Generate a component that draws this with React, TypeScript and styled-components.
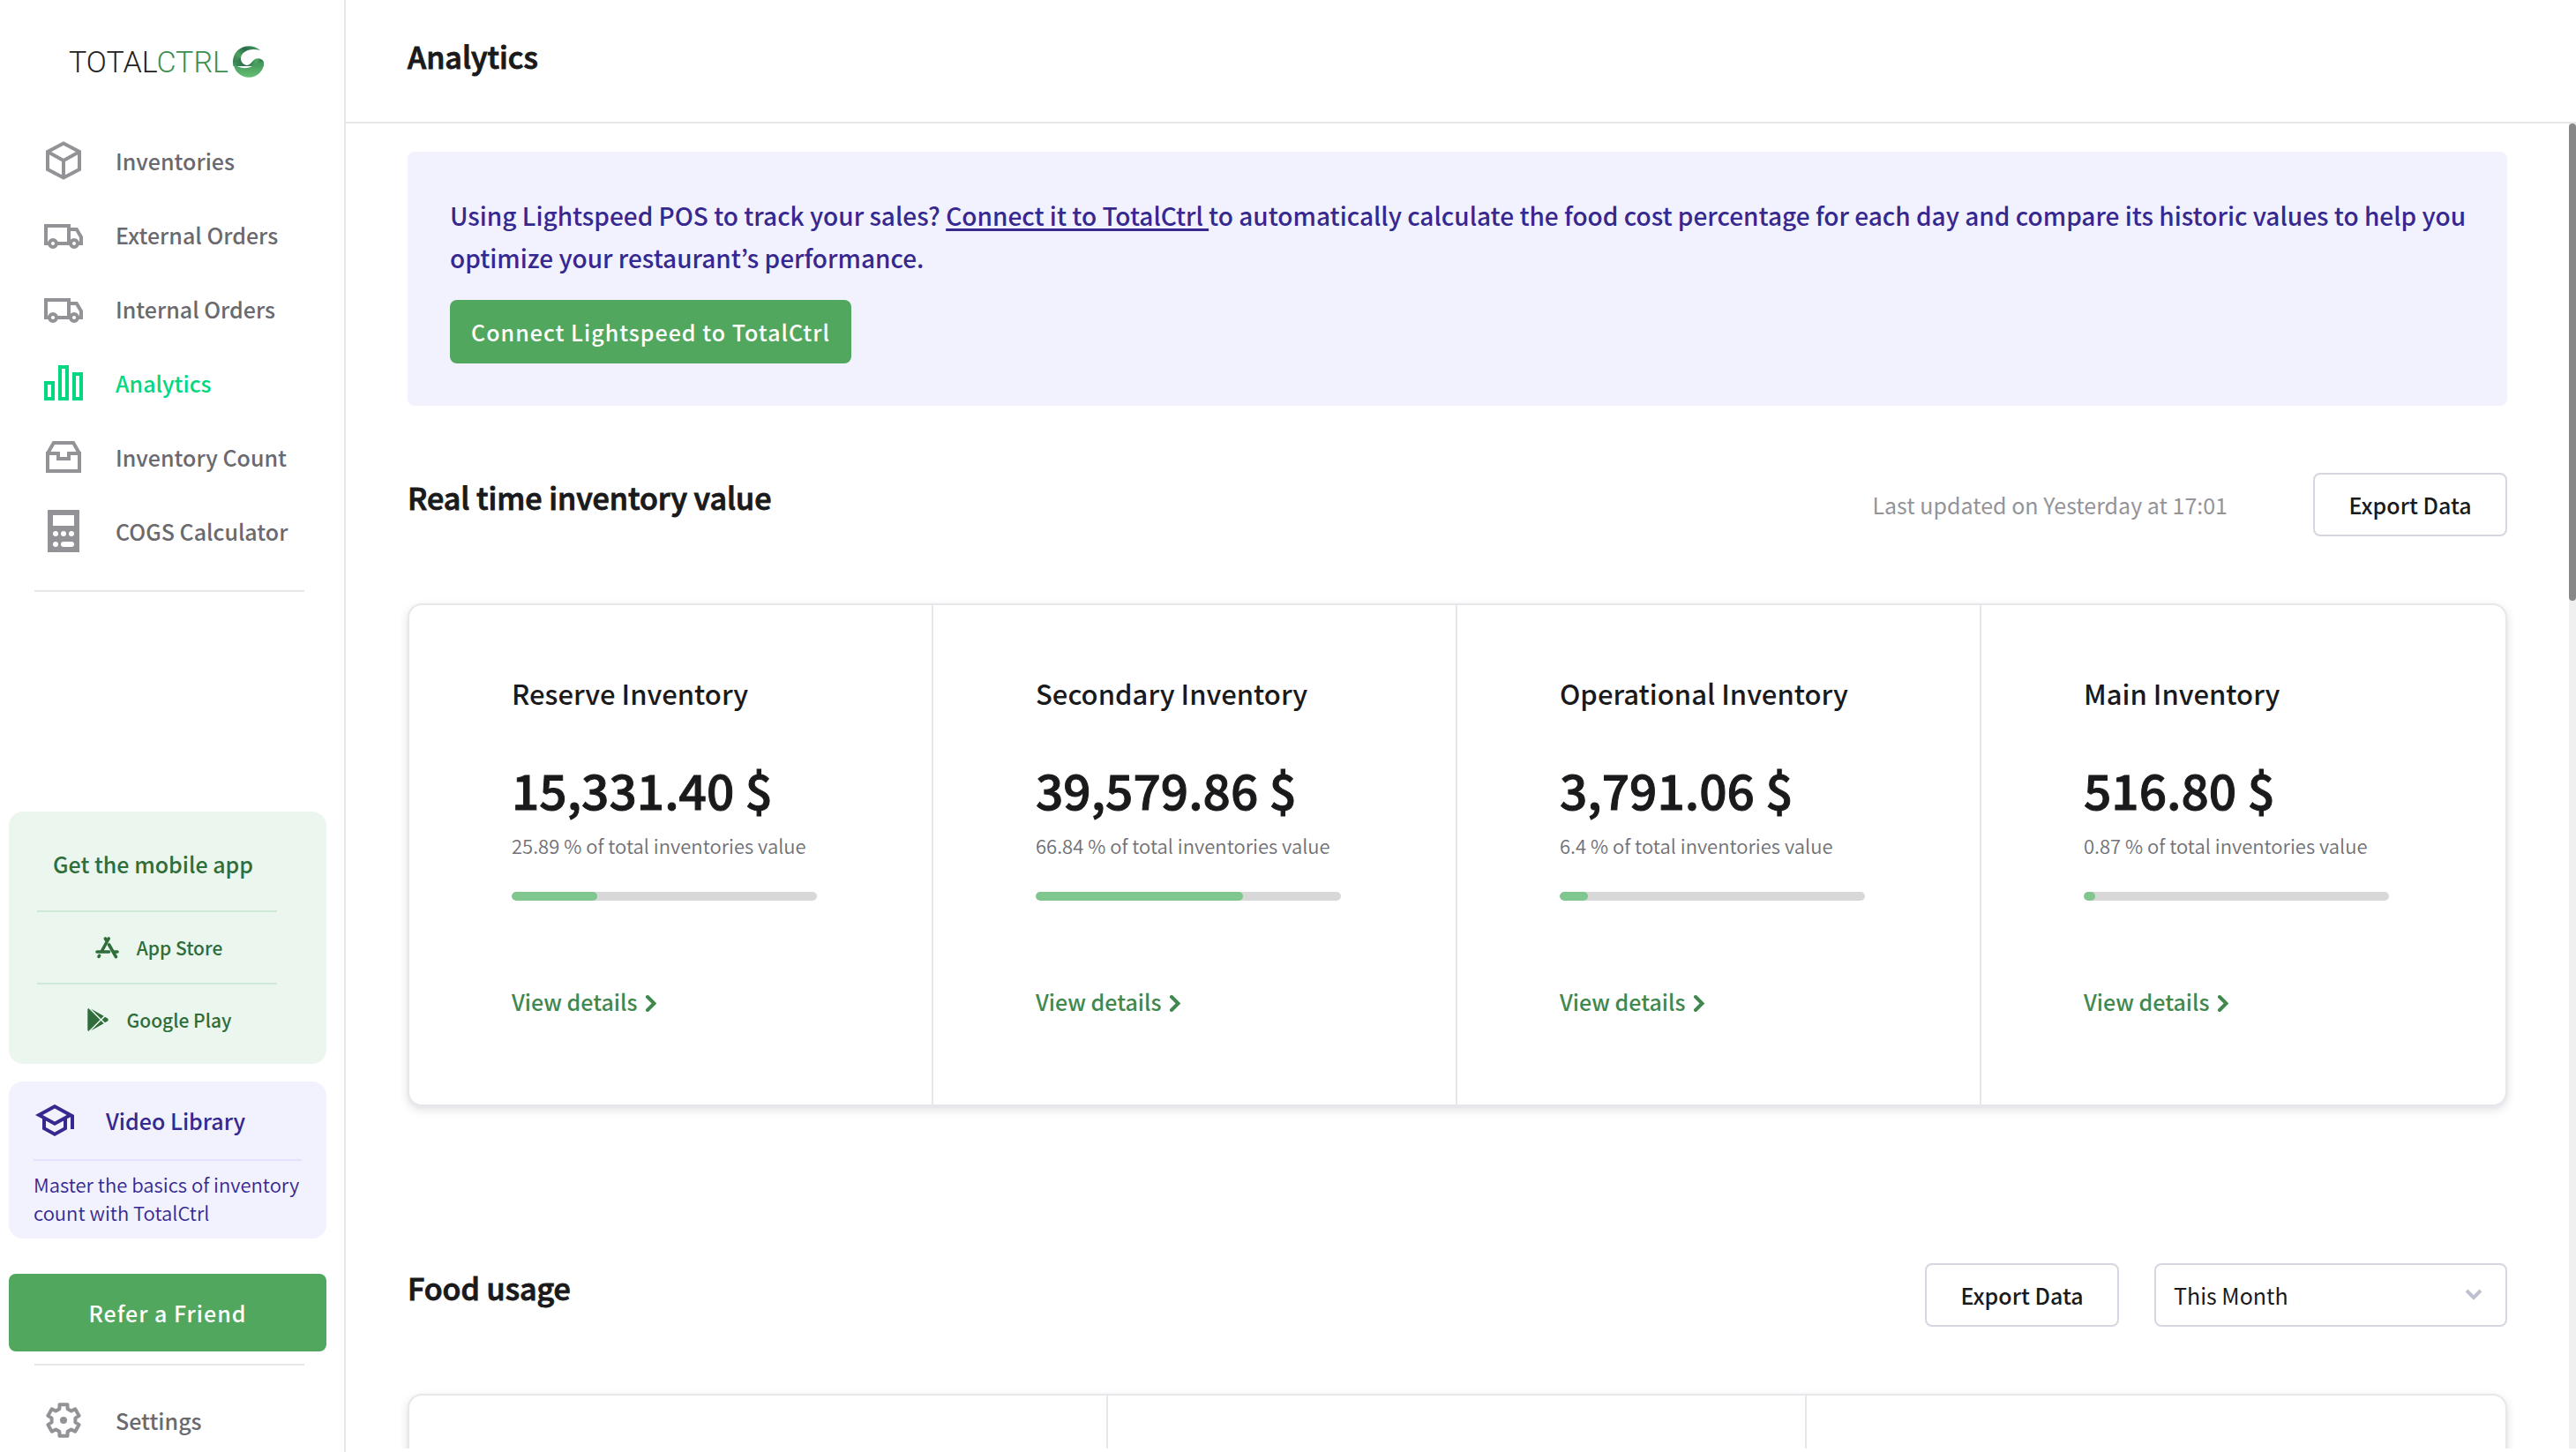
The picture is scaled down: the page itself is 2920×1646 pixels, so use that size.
import React from "react";
import styled, { createGlobalStyle } from "styled-components";
import { FaGooglePlay } from "react-icons/fa";
import { MdOutlineSchool } from "react-icons/md";

const color = {
  ink: "#1a1a1c",
  nav: "#69696e",
  icon: "#929297",
  muted: "#949498",
  sub: "#707075",
  line: "#e6e6eb",
  control: "#d6d6e0",
  active: "#04d782",
  green: "#52a75e",
  link: "#41884f",
  mintBg: "#ebf6ee",
  mintLine: "#d0e8d6",
  forest: "#2f6d3a",
  lilacBg: "#f2f1fe",
  lilacLine: "#e4e1fd",
  indigo: "#35288f",
};

const GlobalStyle = createGlobalStyle`
  *, *::before, *::after { box-sizing: border-box; }
  body {
    margin: 0;
    background: #fff;
    color: ${color.ink};
    font-family: "Noto Sans CJK KR", "Open Sans", sans-serif;
    font-size: 25px;
    line-height: 40px;
  }
  h1, h2, h3, p, ul { margin: 0; padding: 0; }
  ul { list-style: none; }
  a { color: inherit; text-decoration: none; }
  button, select { font: inherit; cursor: pointer; }
  svg { display: block; flex: none; }
`;

/* ---------- shell ---------- */

const Shell = styled.div`
  display: flex;
  height: 100vh;
  overflow: hidden;
`;

const Sidebar = styled.aside`
  flex: none;
  display: flex;
  flex-direction: column;
  width: 392px;
  border-right: 2px solid ${color.line};
`;

const Main = styled.main`
  flex: 1;
  min-width: 0;
  display: flex;
  flex-direction: column;
  padding-bottom: 4px;
`;

const Header = styled.header`
  flex: none;
  height: 140px;
  padding: 36px 70px;
  border-bottom: 2px solid ${color.line};
`;

const Viewport = styled.div`
  flex: 1;
  min-height: 0;
  display: flex;
`;

const Content = styled.div`
  flex: 1;
  min-width: 0;
  padding: 32px 70px 96px;
  overflow-y: auto;
  scrollbar-width: none;
`;

const ScrollTrack = styled.div`
  flex: none;
  width: 8px;
  background: #f0f0f1;
`;

const ScrollThumb = styled.div`
  height: 36%;
  border-radius: 8px;
  background: #888;
`;

/* ---------- sidebar ---------- */

const Brand = styled.a`
  flex: none;
  display: flex;
  align-items: center;
  gap: 5px;
  height: 140px;
  padding-left: 78px;
  font-family: Roboto, sans-serif;
  font-size: 34px;
  font-weight: 300;
  color: #222;
`;

const BrandAccent = styled.span`
  color: #3d8f50;
`;

const NavLink = styled.a<{ $active?: boolean; $compact?: boolean }>`
  display: flex;
  align-items: center;
  gap: 35px;
  height: ${(p) => (p.$compact ? 72 : 84)}px;
  padding-left: 48px;
  font-weight: 500;
  color: ${(p) => (p.$active ? color.active : color.nav)};

  svg {
    color: ${(p) => (p.$active ? color.active : color.icon)};
  }
`;

const Divider = styled.hr`
  flex: none;
  height: 2px;
  margin: 25px 45px 26px 39px;
  border: 0;
  background: ${color.line};
`;

const SidebarFoot = styled.div`
  margin-top: auto;

  ${Divider} {
    margin-top: 14px;
  }
`;

const AppCard = styled.section`
  margin: 0 20px 20px 10px;
  padding: 39px 56px 10px 32px;
  border-radius: 16px;
  background: ${color.mintBg};
  color: ${color.forest};
  font-weight: 500;
`;

const AppTitle = styled.h3`
  margin-bottom: 33px;
  padding-left: 18px;
  font-size: 25px;
  font-weight: 500;
`;

const StoreLink = styled.a`
  display: flex;
  align-items: center;
  justify-content: center;
  gap: 20px;
  height: 82px;
  padding-left: 4px;
  border-top: 2px solid ${color.mintLine};
  font-size: 21px;
`;

const VideoCard = styled.section`
  margin: 0 20px 40px 10px;
  padding: 20px 28px 14px;
  border-radius: 16px;
  background: ${color.lilacBg};
  color: ${color.indigo};
`;

const VideoLink = styled.a`
  display: flex;
  align-items: center;
  gap: 34px;
  padding-bottom: 20px;
  border-bottom: 2px solid ${color.lilacLine};
  font-weight: 500;
`;

const VideoText = styled.p`
  margin-top: 10px;
  font-size: 22px;
  font-weight: 350;
  line-height: 32px;
`;

/* ---------- buttons ---------- */

const PrimaryButton = styled.button`
  height: 72px;
  padding: 0 24px;
  border: 0;
  border-radius: 8px;
  background: ${color.green};
  color: #fff;
  font-weight: 500;
  letter-spacing: 1px;
`;

const ReferButton = styled(PrimaryButton)`
  display: block;
  width: 360px;
  height: 88px;
  margin-left: 10px;
`;

const OutlineButton = styled.button`
  width: 220px;
  height: 72px;
  border: 2px solid ${color.control};
  border-radius: 8px;
  background: #fff;
  color: ${color.ink};
  font-weight: 500;
`;

const SelectBox = styled.label`
  display: grid;
  align-items: center;
  width: 400px;
  height: 72px;

  > * {
    grid-area: 1 / 1;
  }

  svg {
    justify-self: end;
    margin-right: 28px;
    color: #bec1cf;
    pointer-events: none;
  }
`;

const Select = styled.select`
  width: 100%;
  height: 100%;
  padding: 0 64px 0 20px;
  border: 2px solid ${color.control};
  border-radius: 8px;
  appearance: none;
  background: #fff;
  color: ${color.ink};
`;

/* ---------- content ---------- */

const Title = styled.h2`
  font-size: 34px;
  font-weight: 500;
  line-height: 56px;
  -webkit-text-stroke: 1px currentColor;
`;

const Banner = styled.section`
  padding: 48px 40px 48px 48px;
  border-radius: 8px;
  background: ${color.lilacBg};
`;

const BannerText = styled.p`
  margin-bottom: 24px;
  color: ${color.indigo};
  font-size: 28px;
  font-weight: 500;
  line-height: 48px;

  a {
    text-decoration: underline;
    text-decoration-thickness: 3px;
    text-underline-offset: 3px;
  }
`;

const SectionHead = styled.div<{ $gap: number; $top: number }>`
  display: flex;
  align-items: center;
  gap: ${(p) => p.$gap}px;
  margin: ${(p) => p.$top}px 0 76px;

  ${Title} {
    align-self: flex-start;
    margin-right: auto;
  }
`;

const Updated = styled.p`
  color: ${color.muted};
`;

const CardRow = styled.div<{ $columns: number }>`
  display: grid;
  grid-template-columns: repeat(${(p) => p.$columns}, 1fr);
  border: 2px solid ${color.line};
  border-radius: 16px;
  box-shadow: 0 2px 2px ${color.line}, 0 4px 12px rgba(20, 20, 40, 0.12);
`;

const Card = styled.article`
  min-height: 320px;
  padding: 76px 132px 97px 116px;

  & + & {
    box-shadow: -2px 0 0 ${color.line};
  }
`;

const CardTitle = styled.h3`
  font-size: 31px;
  font-weight: 500;
  line-height: 48px;
  white-space: nowrap;
`;

const Amount = styled.p`
  margin-top: 48px;
  font-size: 55px;
  font-weight: 500;
  line-height: 72px;
  white-space: nowrap;
  -webkit-text-stroke: 1px currentColor;
`;

const Share = styled.p`
  margin-top: 12px;
  color: ${color.sub};
  font-size: 22px;
  font-weight: 350;
  line-height: 32px;
  white-space: nowrap;
`;

const Track = styled.div`
  height: 10px;
  margin-top: 37px;
  overflow: hidden;
  border-radius: 5px;
  background: #d8d8d8;
`;

const Fill = styled.div`
  height: 100%;
  border-radius: 5px;
  background: #7fc78e;
`;

const DetailsLink = styled.a`
  display: flex;
  align-items: center;
  gap: 8px;
  margin-top: 94px;
  color: ${color.link};
  font-weight: 500;
`;

/* ---------- icons ---------- */

const Icon = ({ children }: { children: React.ReactNode }) => (
  <svg width="48" height="48" viewBox="0 0 24 24" fill="none" stroke="currentColor" strokeWidth="2" aria-hidden="true">
    {children}
  </svg>
);

const BoxIcon = () => (
  <Icon>
    <path d="M12 2.2 21 7v10l-9 4.8L3 17V7zM3 7l9 5 9-5M12 12v9.8" />
  </Icon>
);

const TruckIcon = () => (
  <Icon>
    <path d="M4 17H2V7h13v10M8 17h8M15 9h4.4L22 13.4V17h-2" />
    <circle cx="6" cy="17" r="2" />
    <circle cx="18" cy="17" r="2" />
  </Icon>
);

const BarsIcon = () => (
  <Icon>
    <path d="M2 12h4v9H2zM10 3h4v18h-4zM18 7h4v14h-4z" />
  </Icon>
);

const TrayIcon = () => (
  <Icon>
    <path d="M3 10h6v3h6v-3h6v10H3zM3 10l3.4-6h11.2L21 10" />
  </Icon>
);

const CalculatorIcon = () => (
  <Icon>
    <g stroke="none">
      <path fill="currentColor" d="M3 0h18v24H3z" />
      <path fill="#fff" d="M6 3h12v6H6z" />
      <circle fill="#fff" cx="7.5" cy="13.5" r="1.5" />
      <circle fill="#fff" cx="12" cy="13.5" r="1.5" />
      <circle fill="#fff" cx="16.5" cy="13.5" r="1.5" />
      <circle fill="#fff" cx="7.5" cy="19.5" r="1.5" />
      <rect fill="#fff" x="10.5" y="18" width="7.5" height="3" rx="1.5" />
    </g>
  </Icon>
);

const gearPoints = [0, 1, 2, 3, 4, 5]
  .flatMap((tooth) =>
    [
      [-20, 6.8],
      [-14, 9.2],
      [14, 9.2],
      [20, 6.8],
    ].map(([offset, radius]) => {
      const a = ((tooth * 60 - 90 + offset) * Math.PI) / 180;
      return `${(12 + radius * Math.cos(a)).toFixed(2)},${(12 + radius * Math.sin(a)).toFixed(2)}`;
    })
  )
  .join(" ");

const GearIcon = () => (
  <Icon>
    <polygon points={gearPoints} strokeLinejoin="round" />
    <circle cx="12" cy="12" r="2" fill="currentColor" stroke="none" />
  </Icon>
);

const AppStoreIcon = () => (
  <svg width="27" height="25" viewBox="0 0 27 25" fill="none" stroke="currentColor" strokeWidth="3.6" strokeLinecap="round" aria-hidden="true">
    <path d="M15.2 2 8 15M11.4 2l1.2 2M2 17h13.5M21 17h4M15.6 9l7.8 13.6" />
    <path d="M4.6 21.4 4 22.4" />
  </svg>
);

const ChevronRight = () => (
  <svg width="14" height="24" viewBox="0 0 14 24" fill="none" stroke="currentColor" strokeWidth="4" strokeLinecap="round" aria-hidden="true">
    <path d="m3 7 7.5 7.5L3 22" />
  </svg>
);

const ChevronDown = () => (
  <svg width="20" height="14" viewBox="0 0 20 14" fill="none" stroke="currentColor" strokeWidth="4" aria-hidden="true">
    <path d="m2 2 8 8 8-8" />
  </svg>
);

const Swirl = () => (
  <svg width="36" height="36" viewBox="0 0 36 36" aria-hidden="true">
    <defs>
      <linearGradient id="swirl-top" x1="1" y1="0" x2="0" y2="1">
        <stop offset="0" stopColor="#4fae64" />
        <stop offset="0.35" stopColor="#2a6b4b" />
        <stop offset="0.6" stopColor="#4ba05e" />
        <stop offset="1" stopColor="#2a6b4b" />
      </linearGradient>
      <linearGradient id="swirl-wave" x1="0" y1="0" x2="1" y2="0">
        <stop offset="0" stopColor="#3f9257" />
        <stop offset="0.4" stopColor="#26644a" />
        <stop offset="0.75" stopColor="#4fa763" />
        <stop offset="1" stopColor="#2a6b4b" />
      </linearGradient>
      <linearGradient id="swirl-base" x1="0" y1="0" x2="0" y2="1">
        <stop offset="0" stopColor="#3f9257" />
        <stop offset="1" stopColor="#66bf75" />
      </linearGradient>
    </defs>
    <path
      fill="url(#swirl-top)"
      d="M31 5C24-1.500 12-1.500 5 5.500 1.500 9 0 13.500 0 18l.5 5L15 22c-4-1.500-6.500-4.500-6-8.500C9.800 7 18 1.500 31 5z"
    />
    <path
      fill="url(#swirl-wave)"
      d="M9 13.500c-.5 4.500 2 8.500 6.500 8.500s6-5 10-7.200c3.500-1.500 8-.3 9 2.700L35 23H2l-1-4z"
    />
    <path
      fill="url(#swirl-base)"
      d="M.2 19.500C6 25.500 14 26.500 21 23.500c5-2.200 9-6 13.500-6 1.500 4.500-.5 9.500-4.500 13.500-6 6-17 6.500-24 0-3-2.700-5-7.500-5.800-11.500z"
    />
  </svg>
);

/* ---------- data ---------- */

const navItems = [
  { label: "Inventories", icon: BoxIcon },
  { label: "External Orders", icon: TruckIcon },
  { label: "Internal Orders", icon: TruckIcon },
  { label: "Analytics", icon: BarsIcon, active: true },
  { label: "Inventory Count", icon: TrayIcon },
  { label: "COGS Calculator", icon: CalculatorIcon },
];

const inventories = [
  { name: "Reserve Inventory", amount: "15,331.40 $", share: 25.89 },
  { name: "Secondary Inventory", amount: "39,579.86 $", share: 66.84 },
  { name: "Operational Inventory", amount: "3,791.06 $", share: 6.4 },
  { name: "Main Inventory", amount: "516.80 $", share: 0.87 },
];

/* The fill keeps its round cap visible at 0 and still ends flush at 100. */
const fillWidth = (share: number) => `calc(${share}% + ${10 - share / 10}px)`;

export default function App() {
  return (
    <>
      <GlobalStyle />
      <Shell>
        <Sidebar>
          <Brand href="#" aria-label="TotalCtrl">
            <span>
              TOTAL<BrandAccent>CTRL</BrandAccent>
            </span>
            <Swirl />
          </Brand>
          <nav>
            <ul>
              {navItems.map(({ label, icon: ItemIcon, active }) => (
                <li key={label}>
                  <NavLink href="#" $active={active} aria-current={active ? "page" : undefined}>
                    <ItemIcon />
                    {label}
                  </NavLink>
                </li>
              ))}
            </ul>
          </nav>
          <Divider />
          <SidebarFoot>
            <AppCard>
              <AppTitle>Get the mobile app</AppTitle>
              <StoreLink href="#">
                <AppStoreIcon />
                App Store
              </StoreLink>
              <StoreLink href="#">
                <FaGooglePlay size={26} />
                Google Play
              </StoreLink>
            </AppCard>
            <VideoCard>
              <VideoLink href="#">
                <MdOutlineSchool size={48} />
                Video Library
              </VideoLink>
              <VideoText>Master the basics of inventory count with TotalCtrl</VideoText>
            </VideoCard>
            <ReferButton type="button">Refer a Friend</ReferButton>
            <Divider />
            <NavLink href="#" $compact>
              <GearIcon />
              Settings
            </NavLink>
          </SidebarFoot>
        </Sidebar>

        <Main>
          <Header>
            <Title as="h1">Analytics</Title>
          </Header>
          <Viewport>
            <Content>
              <Banner>
                <BannerText>
                  Using Lightspeed POS to track your sales? <a href="#">Connect it to TotalCtrl </a>to automatically
                  calculate the food cost percentage for each day and compare its historic values to help you optimize
                  your restaurant’s performance.
                </BannerText>
                <PrimaryButton type="button">Connect Lightspeed to TotalCtrl</PrimaryButton>
              </Banner>

              <SectionHead $gap={97} $top={76}>
                <Title>Real time inventory value</Title>
                <Updated>Last updated on Yesterday at 17:01</Updated>
                <OutlineButton type="button">Export Data</OutlineButton>
              </SectionHead>
              <CardRow $columns={4}>
                {inventories.map(({ name, amount, share }) => (
                  <Card key={name}>
                    <CardTitle>{name}</CardTitle>
                    <Amount>{amount}</Amount>
                    <Share>{share} % of total inventories value</Share>
                    <Track role="progressbar" aria-label={name} aria-valuenow={share} aria-valuemin={0} aria-valuemax={100}>
                      <Fill style={{ width: fillWidth(share) }} />
                    </Track>
                    <DetailsLink href="#">
                      View details
                      <ChevronRight />
                    </DetailsLink>
                  </Card>
                ))}
              </CardRow>

              <SectionHead $gap={40} $top={178}>
                <Title>Food usage</Title>
                <OutlineButton type="button">Export Data</OutlineButton>
                <SelectBox>
                  <Select aria-label="Period" defaultValue="This Month">
                    <option>This Month</option>
                  </Select>
                  <ChevronDown />
                </SelectBox>
              </SectionHead>
              <CardRow $columns={3}>
                <Card />
                <Card />
                <Card />
              </CardRow>
            </Content>
            <ScrollTrack>
              <ScrollThumb />
            </ScrollTrack>
          </Viewport>
        </Main>
      </Shell>
    </>
  );
}
